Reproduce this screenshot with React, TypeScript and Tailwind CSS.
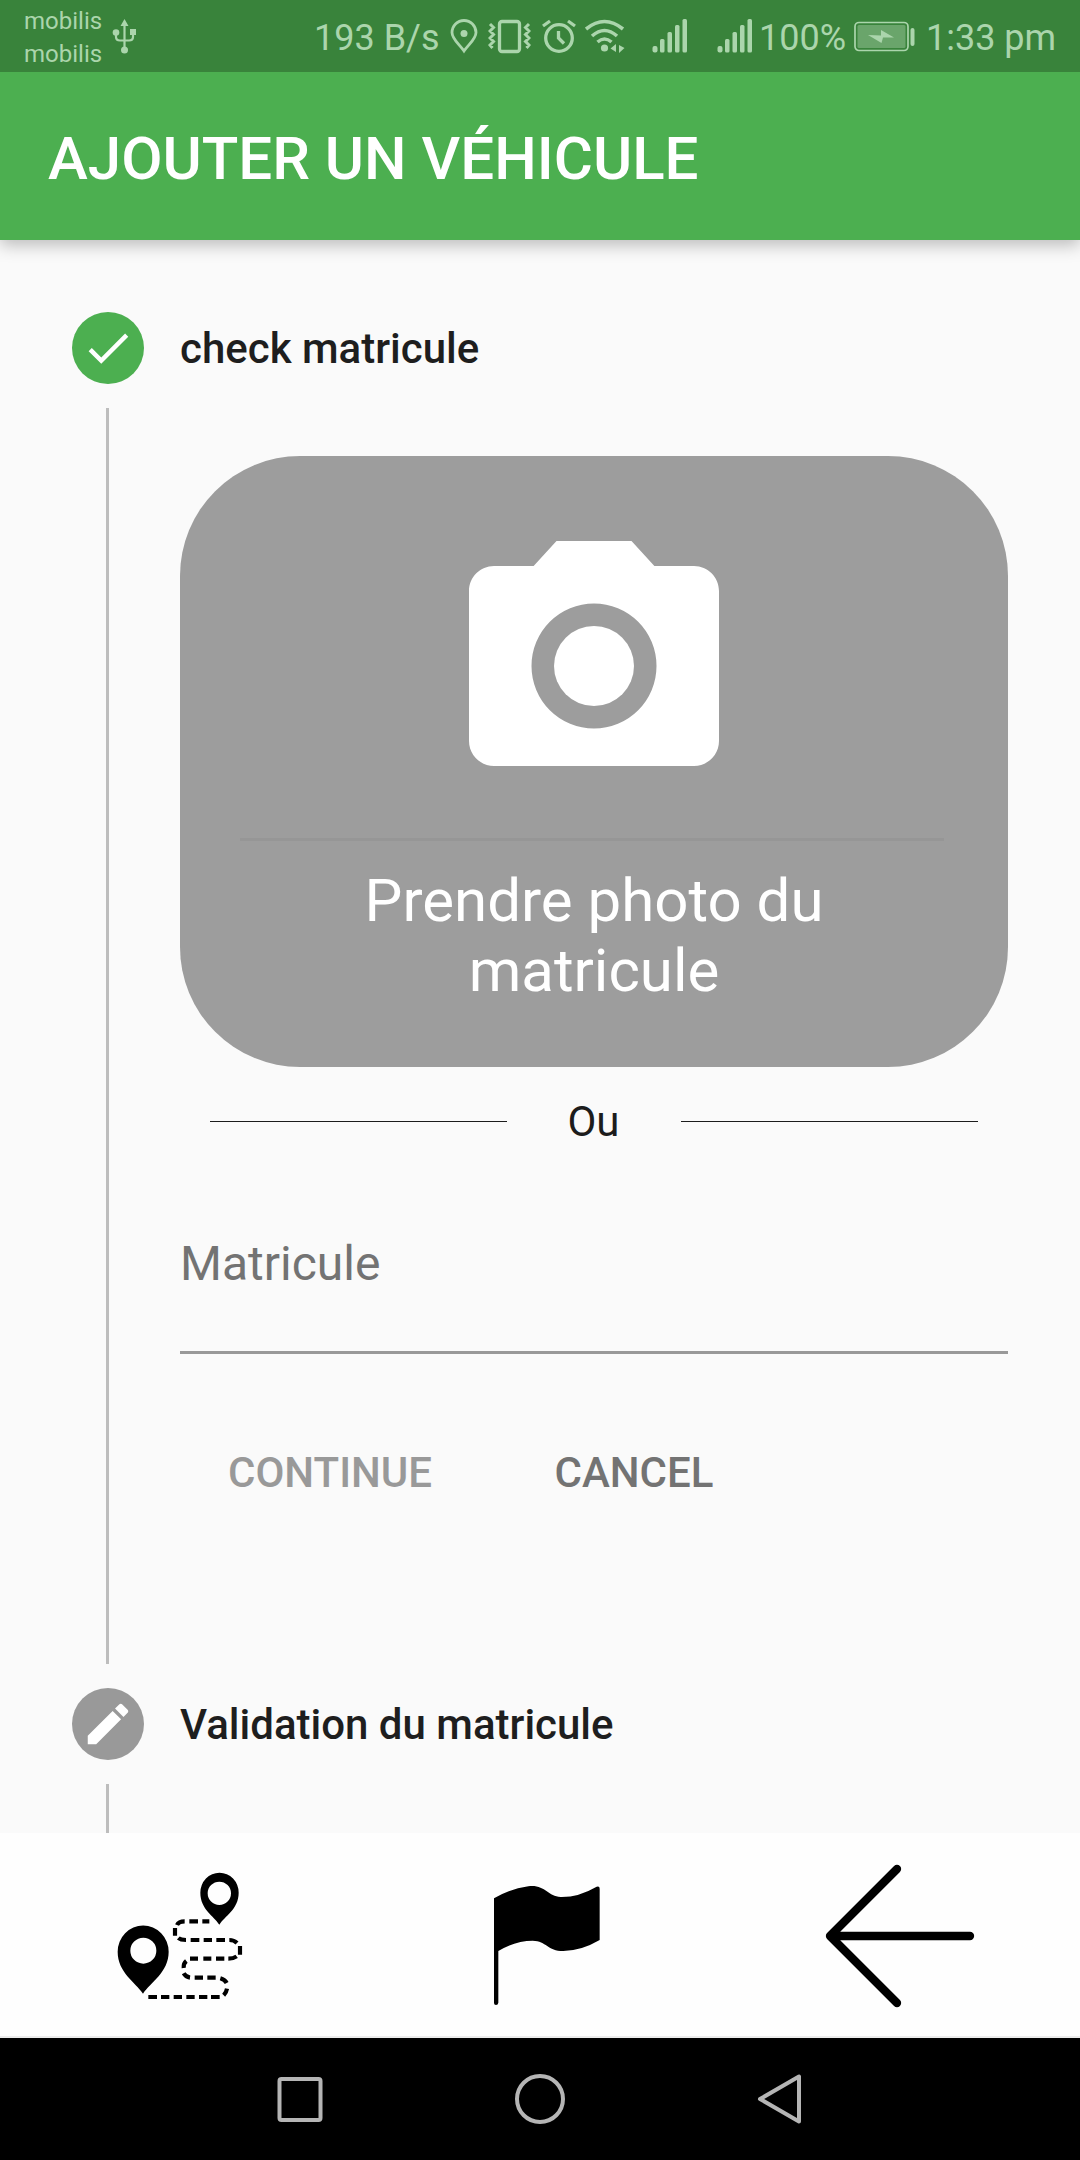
import type { ReactNode } from "react";

function StatusBar() {
  return (
    <div className="relative z-20 flex h-[72px] shrink-0 bg-[#39833b] text-[#abd5ac]">
      <div className="ml-6 flex w-[79px] flex-col pt-[5px] text-[24px] leading-[33px]">
        <span>mobilis</span>
        <span>mobilis</span>
      </div>
      <svg className="ml-[9px] mt-[19px] h-[35px] w-[24px]" viewBox="0 0 24 35" fill="none" stroke="currentColor" strokeWidth="2.2">
        <path d="M12.500 6V30M4 13V18Q4 21.500 8 21.500H17Q21 21.500 21 18V13" />
        <path d="M12.500 0 16.500 7H8.500ZM18 10H24V16H18Z" fill="currentColor" stroke="none" />
        <circle cx="4" cy="13.500" r="3.300" fill="currentColor" stroke="none" />
        <circle cx="12.500" cy="31" r="3.500" fill="currentColor" stroke="none" />
      </svg>
      <span className="ml-[178px] w-[123px] whitespace-nowrap pt-[2px] text-[36px] leading-[72px]">193 B/s</span>
      <svg className="ml-[13px] mt-[19px] h-[35px] w-[28px]" viewBox="0 0 28 35" fill="none" stroke="currentColor" strokeWidth="2.8">
        <path d="M14 32C9 25 2 20 2 13.500A12 12 0 0 1 26 13.500C26 20 19 25 14 32Z" />
        <circle cx="14" cy="14.500" r="3.500" fill="currentColor" stroke="none" />
      </svg>
      <svg className="ml-[10px] mt-[19px] h-[35px] w-[43px]" viewBox="0 0 43 35" fill="none" stroke="currentColor" strokeWidth="3.300">
        <rect x="11.500" y="2.500" width="20" height="30" rx="2.500" />
        <path d="M2 5 5.500 8.500 2 12 5.500 15.500 2 19 5.500 22.500 2 26 4.500 29M41 5 37.500 8.500 41 12 37.500 15.500 41 19 37.500 22.500 41 26 38.500 29" strokeWidth="3" />
      </svg>
      <svg className="ml-[11px] mt-[19px] h-[35px] w-[34px]" viewBox="0 0 34 35" fill="none" stroke="currentColor" strokeWidth="3.300">
        <circle cx="17" cy="19" r="13.300" />
        <path d="M1 7 8 2M33 7 26 2M16.500 12V19L22 24.500" />
      </svg>
      <svg className="ml-[9px] mt-[19px] h-[35px] w-[40px]" viewBox="0 0 40 35" fill="none" stroke="currentColor" strokeWidth="3.600">
        <path d="M1 10Q19.500-5 38 10M7 17Q19.500 6 32 17M12.500 23Q19.500 17 26.500 23" />
        <circle cx="19.500" cy="29" r="3.600" fill="currentColor" stroke="none" />
        <path d="M31 25V33L25.500 29.500ZM34 26V34L39.500 29Z" fill="currentColor" stroke="none" />
      </svg>
      <Signal className="ml-[27px]" />
      <Signal className="ml-[29px]" />
      <span className="ml-[6px] w-[88px] whitespace-nowrap pt-[2px] text-[36px] leading-[72px]">100%</span>
      <svg className="ml-[7px] mt-[21px] h-[31px] w-[62px]" viewBox="0 0 62 31" fill="none">
        <rect x="1" y="1.500" width="53" height="28" rx="4" stroke="currentColor" strokeWidth="1.700" />
        <rect x="3.500" y="4" width="48" height="23" rx="1.500" fill="#6aa56b" />
        <path d="M14 14 27 14.500V9L40 16.500 29 16.500 27.500 22Z" fill="currentColor" />
        <rect x="56.500" y="7" width="4" height="18" rx="2" fill="currentColor" />
      </svg>
      <span className="ml-[10px] whitespace-nowrap pt-[2px] text-[36px] leading-[72px]">1:33 pm</span>
    </div>
  );
}

function Signal({ className }: { className: string }) {
  return (
    <svg className={`mt-[18px] h-[35px] w-[36px] ${className}`} viewBox="0 0 36 35" fill="currentColor">
      <rect x="0.500" y="28" width="5" height="6.500" rx="2" />
      <rect x="8" y="21" width="4.500" height="13.500" rx="1.500" />
      <rect x="15.500" y="14" width="4.500" height="20.500" rx="1.500" />
      <rect x="23" y="7" width="4.500" height="27.500" rx="1.500" />
      <rect x="30.500" y="1" width="4.500" height="33.500" rx="1.500" />
    </svg>
  );
}

function StepHeader({ color, title, icon }: { color: string; title: string; icon: ReactNode }) {
  return (
    <div className="flex h-[72px] items-center gap-9">
      <div className={`flex size-[72px] items-center justify-center rounded-full ${color}`}>{icon}</div>
      <span className="pt-[1px] text-[42px] font-medium leading-[50px] text-[#1e1e1e]">{title}</span>
    </div>
  );
}

function BottomBar() {
  return (
    <div className="flex h-[205px] shrink-0 border-b-2 border-[#ececec] bg-[#fefefe] pl-[90px] pt-[7px]">
      <svg className="h-[180px] w-[190px] shrink-0" viewBox="0 0 570 540">
        <path fillRule="evenodd" d="M159 461C136 426 83 397 83 335A76 78 0 0 1 236 335C236 397 182 426 159 461ZM160 293A39 39 0 1 0 160 371A39 39 0 1 0 160 293Z" />
        <path fillRule="evenodd" d="M388 254C372 228 331 208 331 158A57.500 60 0 0 1 446 158C446 208 404 228 388 254ZM388 125A35 35 0 1 0 388 195A35 35 0 1 0 388 125Z" />
        <g fill="none" stroke="#000" strokeWidth="12.500">
          <path d="M298 244H324M337 244H358M261 255Q266 244 284 244M255 264V287M265 294Q272 300 288 300M302 300H328M341 300H366M379 300H405M418 300Q432 300 441 309M450 318V344M415 356Q430 356 440 349M378 356H403M340 356H364M300 356H324M289 363Q280 370 281 384M281 400Q287 411 300 413M314 413H339M352 413H377M391 415Q405 419 410 429M411 446Q409 458 401 466M363 471H389M327 471H352M289 471H314M251 471H276M213 471H238M175 471H201" />
        </g>
      </svg>
      <svg className="ml-[190px] mt-[10px] h-[180px] w-[160px] shrink-0" viewBox="0 0 480 540">
        <path d="M72 145Q120 116 175 109C226 103 232 140 272 141Q325 142 380 110Q389 107 389 116V270Q335 302 280 303C232 303 230 273 188 272Q138 272 85 303V458Q84 465 78 465Q72 465 72 459Z" />
      </svg>
      <svg className="ml-[170px] h-[190px] w-[200px] shrink-0" viewBox="0 0 600 570" fill="none" stroke="#000" strokeWidth="25" strokeLinecap="round" strokeLinejoin="round">
        <path d="M291 87 90 288 291 489M90 288H510" />
      </svg>
    </div>
  );
}

function SystemNav() {
  return (
    <div className="flex h-[122px] shrink-0 items-center justify-between bg-black px-[274px]">
      <svg className="size-[52px]" viewBox="0 0 52 52" fill="none" stroke="#b5b5b5" strokeWidth="4">
        <rect x="5.500" y="6" width="41" height="41" rx="2" />
      </svg>
      <svg className="size-[52px]" viewBox="0 0 52 52" fill="none" stroke="#b5b5b5" strokeWidth="4">
        <circle cx="26" cy="26" r="23" />
      </svg>
      <svg className="size-[52px]" viewBox="0 0 52 52" fill="none" stroke="#b5b5b5" strokeWidth="4" strokeLinejoin="round">
        <path d="M45 3.500V48.500L6 26Z" />
      </svg>
    </div>
  );
}

export default function App() {
  return (
    <div className="flex h-[2160px] w-[1080px] flex-col overflow-hidden bg-[#fafafa] font-[Roboto,sans-serif]">
      <StatusBar />
      <header className="z-10 flex h-[168px] shrink-0 items-center bg-[#4caf50] px-12 pt-[6px] shadow-[0_5px_16px_rgba(0,0,0,0.26)]">
        <h1 className="whitespace-nowrap text-[60px] font-medium leading-[70px] text-white">AJOUTER UN VÉHICULE</h1>
      </header>

      <main className="flex h-[1593px] shrink-0 flex-col overflow-hidden px-[72px] pt-[72px]">
        <StepHeader
          color="bg-[#4caf50]"
          title="check matricule"
          icon={
            <svg className="size-[54px]" viewBox="0 0 24 24" fill="#fff">
              <path d="M9 16.200 4.800 12l-1.400 1.400L9 19 21 7l-1.400-1.400L9 16.200z" />
            </svg>
          }
        />
        <div className="my-6 flex h-[1256px] shrink-0">
          <div className="ml-[34px] h-full w-[3px] bg-[#bdbdbd]" />
          <div className="ml-[71px] flex w-[828px] flex-col pt-12">
            <button className="flex h-[611px] shrink-0 flex-col items-center rounded-[120px] bg-[#9d9d9d] px-[60px] pt-[60px]">
              <svg className="size-[300px] shrink-0" viewBox="0 0 24 24" fill="#fff">
                <circle cx="12" cy="12" r="3.200" />
                <path fillRule="evenodd" d="M9 2 7.170 4H4c-1.100 0-2 .9-2 2v12c0 1.100.9 2 2 2h16c1.100 0 2-.9 2-2V6c0-1.100-.9-2-2-2h-3.170L15 2H9zM12 7A5 5 0 1 1 12 17A5 5 0 1 1 12 7z" />
              </svg>
              <div className="mr-[4px] mt-[22px] h-[3px] w-[704px] shrink-0 bg-[#969696]" />
              <span className="mt-[25px] w-[600px] text-[60px] leading-[70px] text-white">Prendre photo du matricule</span>
            </button>
            <div className="flex h-[108px] items-center px-[30px]">
              <div className="h-px w-[297px] bg-[#1c1c1c]" />
              <span className="flex-1 pr-[1px] pt-[2px] text-center text-[42px] leading-[50px] text-[#1c1c1c]">Ou</span>
              <div className="h-px w-[297px] bg-[#1c1c1c]" />
            </div>
            <div className="flex h-[179px] items-start border-b-[3px] border-[#999999] pt-[61px] text-[48px] leading-[56px] text-[#737373]">
              Matricule
            </div>
            <div className="flex pt-[94px] text-[42px] font-medium leading-[50px]">
              <button className="ml-12 w-[204px] whitespace-nowrap text-[#999999]">CONTINUE</button>
              <button className="ml-[121px] w-[162px] whitespace-nowrap text-[#737373]">CANCEL</button>
            </div>
          </div>
        </div>
        <StepHeader
          color="bg-[#999999]"
          title="Validation du matricule"
          icon={
            <svg className="size-[54px]" viewBox="0 0 24 24" fill="#fff">
              <path d="M3 17.250V21h3.750L17.810 9.940l-3.750-3.750L3 17.250zM20.710 7.040c.39-.39.39-1.020 0-1.410l-2.340-2.340c-.39-.39-1.020-.39-1.410 0l-1.830 1.830 3.750 3.750 1.830-1.830z" />
            </svg>
          }
        />
        <div className="ml-[34px] mt-6 h-[49px] w-[3px] shrink-0 bg-[#bdbdbd]" />
      </main>

      <BottomBar />
      <SystemNav />
    </div>
  );
}
